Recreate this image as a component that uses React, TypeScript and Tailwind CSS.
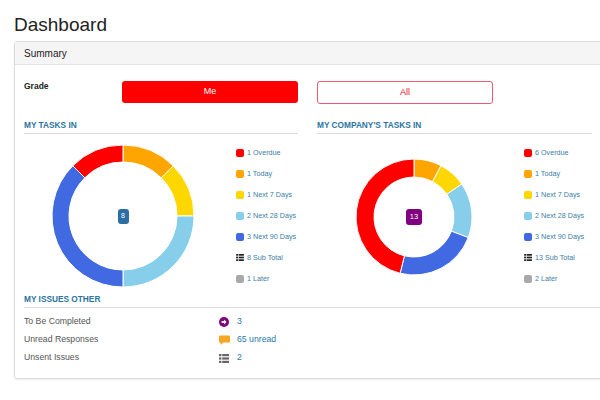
type Slice = { value: number; color: string };

const legendColors = {
  overdue: "bg-[#ff0000]",
  today: "bg-[#ffa500]",
  next7: "bg-[#ffd700]",
  next28: "bg-[#87ceeb]",
  next90: "bg-[#4169e1]",
  later: "bg-[#a9a9a9]",
};

function point(cx: number, cy: number, r: number, deg: number) {
  const a = (deg * Math.PI) / 180;
  return [cx + r * Math.sin(a), cy - r * Math.cos(a)];
}

function segment(cx: number, cy: number, r0: number, r1: number, a0: number, a1: number) {
  const large = a1 - a0 > 180 ? 1 : 0;
  const [x1, y1] = point(cx, cy, r1, a0);
  const [x2, y2] = point(cx, cy, r1, a1);
  const [x3, y3] = point(cx, cy, r0, a1);
  const [x4, y4] = point(cx, cy, r0, a0);
  return `M${x1} ${y1} A${r1} ${r1} 0 ${large} 1 ${x2} ${y2} L${x3} ${y3} A${r0} ${r0} 0 ${large} 0 ${x4} ${y4} Z`;
}

function Donut({ size, inner, slices }: { size: number; inner: number; slices: Slice[] }) {
  const total = slices.reduce((s, x) => s + x.value, 0);
  const c = size / 2;
  const outer = c - 1;
  let start = 0;
  return (
    <svg width={size} height={size} viewBox={`0 0 ${size} ${size}`}>
      {slices.map((s, i) => {
        const end = start + (s.value / total) * 360;
        const d = segment(c, c, inner, outer, start, end);
        start = end;
        return <path key={i} d={d} fill={s.color} stroke="#fff" strokeWidth={1} />;
      })}
    </svg>
  );
}

function ListIcon({ color, w, h }: { color: string; w: number; h: number }) {
  return (
    <svg width={w} height={h} viewBox="0 0 10 9" fill={color}>
      <rect x="0" y="0" width="2.4" height="2.2" />
      <rect x="3.2" y="0" width="6.8" height="2.2" />
      <rect x="0" y="3.4" width="2.4" height="2.2" />
      <rect x="3.2" y="3.4" width="6.8" height="2.2" />
      <rect x="0" y="6.8" width="2.4" height="2.2" />
      <rect x="3.2" y="6.8" width="6.8" height="2.2" />
    </svg>
  );
}

function Legend({ items }: { items: { label: string; color?: string; total?: boolean }[] }) {
  return (
    <div className="flex flex-col">
      {items.map((it) => (
        <div key={it.label} className="h-[21px] flex items-center gap-[3px]">
          {it.total ? (
            <span className="w-[8px] flex items-center">
              <ListIcon color="#222" w={8} h={7} />
            </span>
          ) : (
            <span className={`w-[8px] h-[8px] rounded-[2px] ${it.color}`} />
          )}
          <span className="text-[7.2px] leading-none text-[#3d7ea6]">{it.label}</span>
        </div>
      ))}
    </div>
  );
}

function SectionHeading({ children }: { children: React.ReactNode }) {
  return (
    <h3 className="text-[8.3px] font-bold uppercase text-[#2b74a0] leading-[12px] pb-[2px] border-b border-[#ddd]">
      {children}
    </h3>
  );
}

export default function App() {
  const mine: Slice[] = [
    { value: 1, color: "#ffa500" },
    { value: 1, color: "#ffd700" },
    { value: 2, color: "#87ceeb" },
    { value: 3, color: "#4169e1" },
    { value: 1, color: "#ff0000" },
  ];
  const company: Slice[] = [
    { value: 1, color: "#ffa500" },
    { value: 1, color: "#ffd700" },
    { value: 2, color: "#87ceeb" },
    { value: 3, color: "#4169e1" },
    { value: 6, color: "#ff0000" },
  ];

  return (
    <div className="w-[600px] h-[400px] overflow-hidden bg-white font-['Liberation_Sans',Arial,sans-serif]">
      <div className="w-[640px] pl-[14px]">
        <h1 className="pt-[15px] text-[19px] leading-none text-[#222]">Dashboard</h1>

        {/* Summary card */}
        <div className="mt-[7px] w-[612px] border border-[#ddd] rounded-[3px] shadow-[0_1px_2px_rgba(0,0,0,0.08)]">
          <div className="h-[23px] bg-[#f5f5f5] border-b border-[#e3e3e3] flex items-center pl-[9px] text-[10px] text-[#222]">
            Summary
          </div>

          <div className="px-[9px] pt-[16px] pb-[11px]">
            {/* Grade */}
            <div className="flex items-start">
              <div className="w-[98px] text-[8.5px] font-bold leading-[10px] text-[#222]">Grade</div>
              <button className="w-[176px] h-[22px] rounded-[3px] bg-[#ff0000] text-white text-[9px] font-medium flex items-center justify-center">
                Me
              </button>
              <button className="ml-[19px] w-[176px] h-[23px] rounded-[3px] border border-[#ef5a6e] bg-white text-[#e0102a] text-[9px] flex items-center justify-center">
                All
              </button>
            </div>

            {/* Charts */}
            <div className="mt-[15px] flex gap-[19px]">
              <div className="w-[274px]">
                <SectionHeading>My Tasks In</SectionHeading>
                <div className="flex items-start">
                  <div className="relative mt-[10px] ml-[27px]">
                    <Donut size={144} inner={54} slices={mine} />
                    <div className="absolute inset-0 flex items-center justify-center">
                      <span className="w-[11px] h-[15px] rounded-[3px] bg-[#2e6da4] text-white text-[7px] flex items-center justify-center">
                        8
                      </span>
                    </div>
                  </div>
                  <div className="ml-[41px] mt-[8px]">
                    <Legend
                      items={[
                        { label: "1 Overdue", color: legendColors.overdue },
                        { label: "1 Today", color: legendColors.today },
                        { label: "1 Next 7 Days", color: legendColors.next7 },
                        { label: "2 Next 28 Days", color: legendColors.next28 },
                        { label: "3 Next 90 Days", color: legendColors.next90 },
                        { label: "8 Sub Total", total: true },
                        { label: "1 Later", color: legendColors.later },
                      ]}
                    />
                  </div>
                </div>
              </div>

              <div className="w-[275px]">
                <SectionHeading>My Company's Tasks In</SectionHeading>
                <div className="flex items-start">
                  <div className="relative mt-[24px] ml-[38px]">
                    <Donut size={118} inner={40} slices={company} />
                    <div className="absolute inset-0 flex items-center justify-center">
                      <span className="w-[16px] h-[16px] rounded-[3px] bg-[#800080] text-white text-[7.5px] flex items-center justify-center">
                        13
                      </span>
                    </div>
                  </div>
                  <div className="ml-[51px] mt-[8px]">
                    <Legend
                      items={[
                        { label: "6 Overdue", color: legendColors.overdue },
                        { label: "1 Today", color: legendColors.today },
                        { label: "1 Next 7 Days", color: legendColors.next7 },
                        { label: "2 Next 28 Days", color: legendColors.next28 },
                        { label: "3 Next 90 Days", color: legendColors.next90 },
                        { label: "13 Sub Total", total: true },
                        { label: "2 Later", color: legendColors.later },
                      ]}
                    />
                  </div>
                </div>
              </div>
            </div>

            {/* Issues */}
            <div className="mt-[4px]">
              <SectionHeading>My Issues Other</SectionHeading>
              <div className="mt-[5px] text-[8.7px]">
                <div className="h-[18px] flex items-center">
                  <span className="w-[195px] text-[#555]">To Be Completed</span>
                  <span className="w-[18px] flex items-center">
                    <svg width="10" height="10" viewBox="0 0 10 10">
                      <circle cx="5" cy="5" r="5" fill="#800080" />
                      <path d="M2.6 4.1h2.6V2.6L7.6 5 5.2 7.4V5.9H2.6z" fill="#fff" />
                    </svg>
                  </span>
                  <span className="text-[#2a79a8]">3</span>
                </div>
                <div className="h-[18px] flex items-center">
                  <span className="w-[195px] text-[#555]">Unread Responses</span>
                  <span className="w-[18px] flex items-center">
                    <svg width="11" height="10" viewBox="0 0 11 10">
                      <path d="M1 0.5h9a1 1 0 0 1 1 1v5a1 1 0 0 1-1 1H4.5L1.5 9.8V7.5H1a1 1 0 0 1-1-1v-5a1 1 0 0 1 1-1z" fill="#f5a623" />
                    </svg>
                  </span>
                  <span className="text-[#2a79a8]">65 unread</span>
                </div>
                <div className="h-[18px] flex items-center">
                  <span className="w-[195px] text-[#555]">Unsent Issues</span>
                  <span className="w-[18px] flex items-center">
                    <ListIcon color="#666" w={10} h={9} />
                  </span>
                  <span className="text-[#2a79a8]">2</span>
                </div>
              </div>
            </div>
          </div>
        </div>
      </div>
    </div>
  );
}
